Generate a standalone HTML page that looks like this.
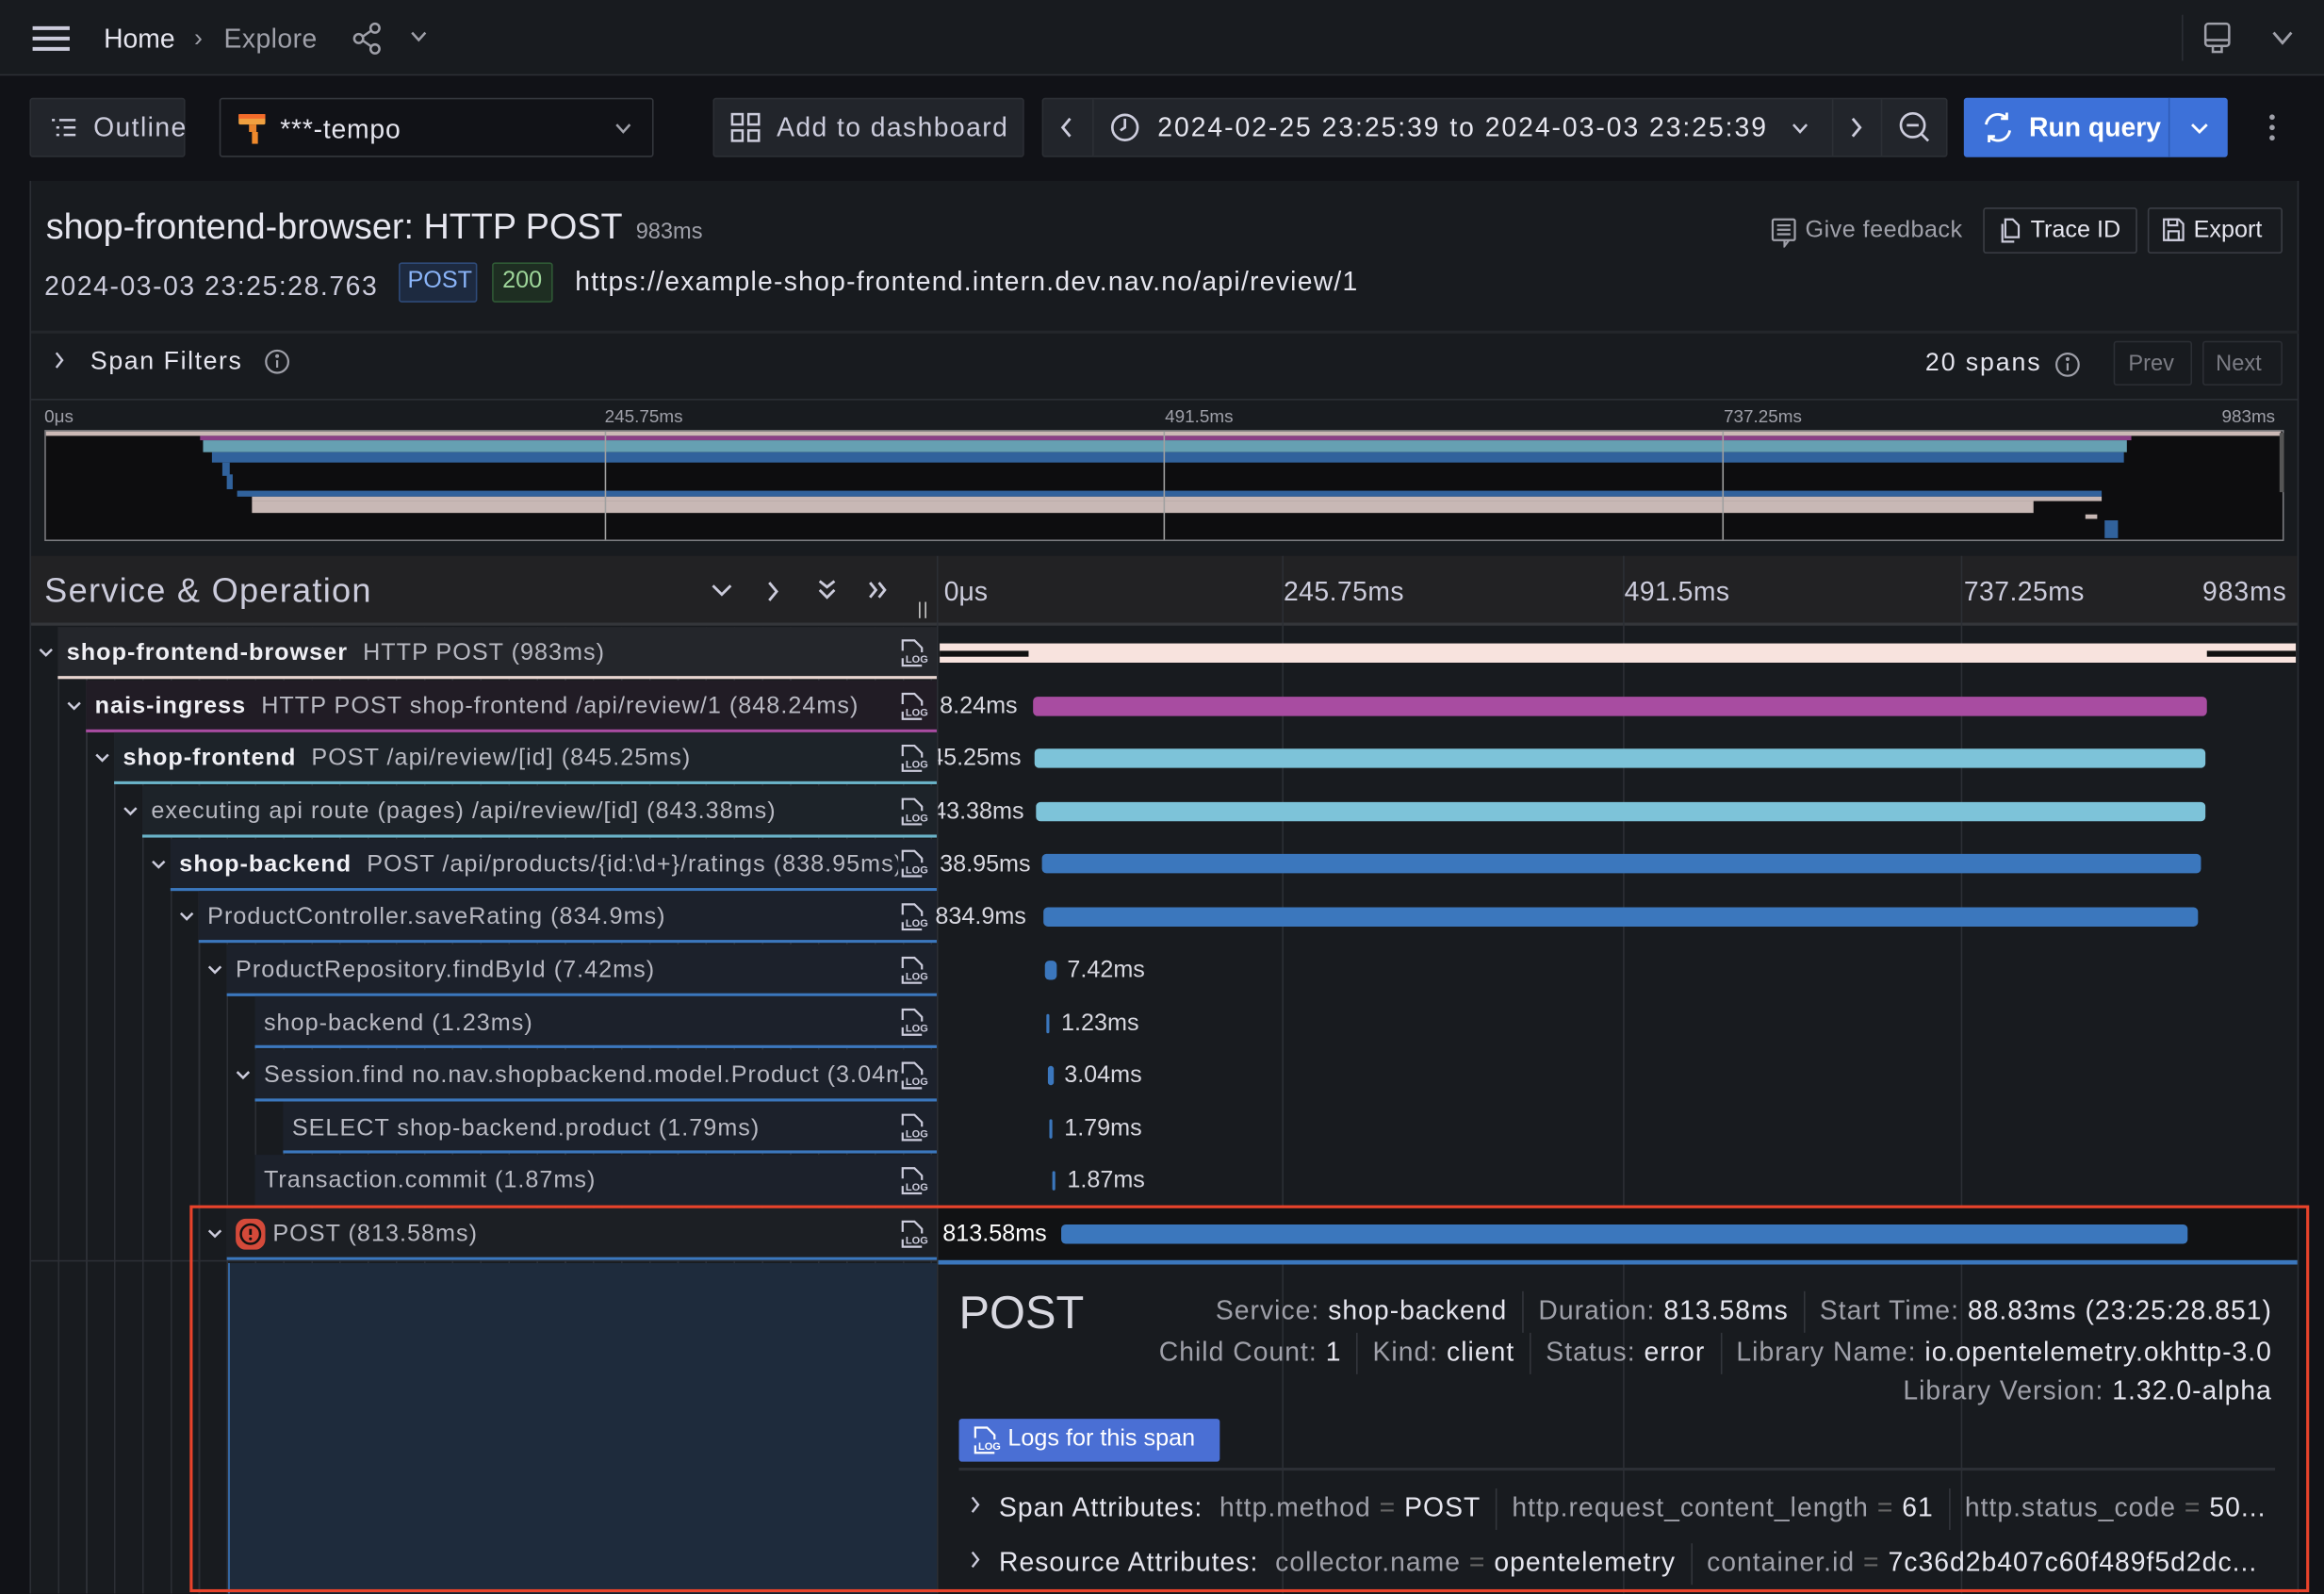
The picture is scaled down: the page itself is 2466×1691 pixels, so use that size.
<!DOCTYPE html>
<html><head><meta charset="utf-8">
<style>
*{box-sizing:border-box;margin:0;padding:0}
html,body{width:2466px;height:1690px;overflow:hidden;background:#111217}
#w{position:absolute;left:0;top:0;width:1568px;height:1075px;transform:scale(1.57270);transform-origin:0 0;font-family:"Liberation Sans",sans-serif;color:#ccccdc;background:#111217;overflow:hidden}
.a{position:absolute}
.t{position:absolute;white-space:nowrap;line-height:1}
.btn{position:absolute;border:1px solid #2c2f35;background:#22252b;border-radius:2px}
.g{color:#9fa0a9}
.bar{position:absolute;height:13px;border-radius:3px}
.tk{position:absolute;top:375px;width:1px;background:#2c2f35}
.lbl{position:absolute;font-size:16px;white-space:nowrap;line-height:1}
.rl{letter-spacing:0.65px}
.md{font-size:18px;white-space:nowrap;letter-spacing:0.65px}
.md b{color:#e6e6ef;font-weight:normal}
.md .s{display:inline-block;width:1px;height:28px;background:#33363c;vertical-align:middle;margin:0 10px}
</style></head><body><div id="w">

<!-- top bar -->
<div class="a" style="left:0;top:0;width:1568px;height:51px;background:#181b1f;border-bottom:1px solid #2c2f35"></div>
<svg class="a" style="left:21px;top:16px" width="27" height="20"><g stroke="#ccccdc" stroke-width="2.5"><line x1="1" y1="3" x2="26" y2="3"/><line x1="1" y1="10" x2="26" y2="10"/><line x1="1" y1="17" x2="26" y2="17"/></g></svg>
<div class="t" style="left:70px;top:17px;font-size:18px;color:#e6e6ef">Home</div>
<div class="t g" style="left:131px;top:17px;font-size:17px">›</div>
<div class="t g" style="left:151px;top:17px;font-size:18px;letter-spacing:0.3px">Explore</div>
<svg class="a" style="left:237px;top:15px" width="22" height="22" fill="none" stroke="#9fa0a9" stroke-width="1.6"><circle cx="16" cy="4" r="3"/><circle cx="5" cy="11" r="3"/><circle cx="16" cy="18" r="3"/><line x1="8" y1="9.5" x2="13" y2="6"/><line x1="8" y1="12.5" x2="13" y2="16"/></svg>
<svg class="a" style="left:277px;top:21px" width="11" height="8" fill="none" stroke="#9fa0a9" stroke-width="1.6"><polyline points="1,1 5.5,6 10,1"/></svg>
<div class="a" style="left:1472px;top:10px;width:1px;height:31px;background:#2c2f35"></div>
<svg class="a" style="left:1486px;top:15px" width="20" height="22" fill="none" stroke="#9fa0a9" stroke-width="1.6"><rect x="2" y="1" width="16" height="15" rx="2"/><line x1="2" y1="12" x2="18" y2="12"/><rect x="7" y="16" width="6" height="4"/></svg>
<svg class="a" style="left:1533px;top:21px" width="14" height="10" fill="none" stroke="#9fa0a9" stroke-width="1.8"><polyline points="1,1 7,8 13,1"/></svg>

<!-- toolbar -->
<div class="btn" style="left:20px;top:66px;width:105px;height:40px"></div>
<svg class="a" style="left:34px;top:79px" width="18" height="14" stroke="#ccccdc" stroke-width="1.6"><line x1="1" y1="2" x2="3" y2="2"/><line x1="6" y1="2" x2="17" y2="2"/><line x1="4" y1="7" x2="6" y2="7"/><line x1="9" y1="7" x2="17" y2="7"/><line x1="4" y1="12" x2="6" y2="12"/><line x1="9" y1="12" x2="17" y2="12"/></svg>
<div class="t" style="left:63px;top:77px;font-size:18px;letter-spacing:0.9px">Outline</div>
<div class="a" style="left:148px;top:66px;width:293px;height:40px;background:#111217;border:1px solid #34373d;border-radius:2px"></div>
<svg class="a" style="left:160px;top:76px" width="22" height="22"><rect x="1" y="1" width="18" height="7" rx="1" fill="#f0a040"/><rect x="1" y="1" width="18" height="3" fill="#f46a2a"/><rect x="8" y="8" width="5" height="5" fill="#e8832c"/><rect x="10" y="13" width="4" height="8" fill="#f08a2c"/></svg>
<div class="t" style="left:189px;top:78px;font-size:18px;color:#e6e6ef;letter-spacing:0.5px">***-tempo</div>
<svg class="a" style="left:415px;top:83px" width="11" height="8" fill="none" stroke="#9fa0a9" stroke-width="1.6"><polyline points="1,1 5.5,6 10,1"/></svg>

<div class="btn" style="left:481px;top:66px;width:210px;height:40px"></div>
<svg class="a" style="left:493px;top:76px" width="20" height="20" fill="none" stroke="#ccccdc" stroke-width="1.6"><rect x="1" y="1" width="7" height="7"/><rect x="12" y="1" width="7" height="7"/><rect x="1" y="12" width="7" height="7"/><rect x="12" y="12" width="7" height="7"/></svg>
<div class="t" style="left:524px;top:77px;font-size:18px;letter-spacing:0.9px">Add to dashboard</div>

<div class="btn" style="left:703px;top:66px;width:611px;height:40px"></div>
<div class="a" style="left:737px;top:67px;width:1px;height:38px;background:#2c2f35"></div>
<div class="a" style="left:1236px;top:67px;width:1px;height:38px;background:#2c2f35"></div>
<div class="a" style="left:1269px;top:67px;width:1px;height:38px;background:#2c2f35"></div>
<svg class="a" style="left:715px;top:79px" width="10" height="14" fill="none" stroke="#ccccdc" stroke-width="1.8"><polyline points="7,1 2,7 7,13"/></svg>
<svg class="a" style="left:749px;top:76px" width="20" height="20" fill="none" stroke="#ccccdc" stroke-width="1.7"><circle cx="10" cy="10" r="8.5"/><polyline points="10,4 10,10 7,12"/></svg>
<div class="t" style="left:781px;top:77px;font-size:18px;color:#e6e6ef;letter-spacing:1.25px">2024-02-25 23:25:39 to 2024-03-03 23:25:39</div>
<svg class="a" style="left:1209px;top:83px" width="11" height="8" fill="none" stroke="#ccccdc" stroke-width="1.6"><polyline points="1,1 5.5,6 10,1"/></svg>
<svg class="a" style="left:1247px;top:79px" width="10" height="14" fill="none" stroke="#ccccdc" stroke-width="1.8"><polyline points="3,1 8,7 3,13"/></svg>
<svg class="a" style="left:1281px;top:75px" width="22" height="22" fill="none" stroke="#ccccdc" stroke-width="1.7"><circle cx="9.5" cy="9.5" r="8"/><line x1="5.5" y1="9.5" x2="13.5" y2="9.5"/><line x1="15" y1="15" x2="20" y2="20"/></svg>

<div class="a" style="left:1325px;top:66px;width:178px;height:40px;background:#3d71d9;border-radius:2px"></div>
<div class="a" style="left:1463px;top:66px;width:1px;height:40px;background:#2f5bb5"></div>
<svg class="a" style="left:1337px;top:75px" width="22" height="22" fill="none" stroke="#fff" stroke-width="1.8"><path d="M17 5 A8 8 0 0 0 3 9"/><polyline points="17,1 17,5 13,5"/><path d="M5 17 A8 8 0 0 0 19 13"/><polyline points="5,21 5,17 9,17"/></svg>
<div class="t" style="left:1369px;top:77px;font-size:18px;color:#fff;font-weight:bold">Run query</div>
<svg class="a" style="left:1478px;top:83px" width="12" height="8" fill="none" stroke="#fff" stroke-width="1.8"><polyline points="1,1 6,6 11,1"/></svg>
<svg class="a" style="left:1530px;top:76px" width="6" height="20" fill="#9fa0a9"><circle cx="3" cy="3" r="1.8"/><circle cx="3" cy="10" r="1.8"/><circle cx="3" cy="17" r="1.8"/></svg>

<!-- main panel -->
<div class="a" style="left:20px;top:122px;width:1531px;height:953px;background:#181b1f;border-left:1px solid #2c2f35;border-right:1px solid #2c2f35"></div>
<div class="t" style="left:31px;top:142px;font-size:24px;color:#e6e6ef">shop-frontend-browser: HTTP POST</div>
<div class="t g" style="left:429px;top:149px;font-size:15px">983ms</div>
<div class="t" style="left:30px;top:184px;font-size:18px;letter-spacing:1px">2024-03-03 23:25:28.763</div>
<div class="a" style="left:269px;top:177px;width:53px;height:27px;background:#1d2a40;border:1px solid #2e4a78;border-radius:2px"></div>
<div class="t" style="left:275px;top:182px;font-size:16px;color:#8ab4f8">POST</div>
<div class="a" style="left:332px;top:177px;width:41px;height:27px;background:#1e2e22;border:1px solid #2f5a35;border-radius:2px"></div>
<div class="t" style="left:339px;top:182px;font-size:16px;color:#9ed69a">200</div>
<div class="t" style="left:388px;top:181px;font-size:18px;color:#e6e6ef;letter-spacing:0.8px">https://example-shop-frontend.intern.dev.nav.no/api/review/1</div>

<svg class="a" style="left:1195px;top:147px" width="18" height="20" fill="none" stroke="#9fa0a9" stroke-width="1.4"><rect x="1" y="1" width="15" height="14" rx="1"/><line x1="4" y1="5" x2="13" y2="5"/><line x1="4" y1="8" x2="13" y2="8"/><line x1="4" y1="11" x2="13" y2="11"/><polyline points="9,15 9,19 12,15"/></svg>
<div class="t g" style="left:1218px;top:148px;font-size:16px;letter-spacing:0.3px">Give feedback</div>
<div class="a" style="left:1338px;top:140px;width:104px;height:31px;border:1px solid #3b3e45;border-radius:2px"></div>
<svg class="a" style="left:1349px;top:147px" width="14" height="17" fill="none" stroke="#ccccdc" stroke-width="1.4"><path d="M4 1h5l4 4v8H4z"/><path d="M2 4v12h8"/></svg>
<div class="t" style="left:1370px;top:148px;font-size:16px;color:#e6e6ef">Trace ID</div>
<div class="a" style="left:1449px;top:140px;width:91px;height:31px;border:1px solid #3b3e45;border-radius:2px"></div>
<svg class="a" style="left:1459px;top:147px" width="15" height="16" fill="none" stroke="#ccccdc" stroke-width="1.4"><path d="M1 1h10l3 3v11H1z"/><rect x="4" y="1" width="6" height="4"/><rect x="4" y="9" width="7" height="6"/></svg>
<div class="t" style="left:1480px;top:148px;font-size:16px;color:#e6e6ef">Export</div>

<div class="a" style="left:21px;top:223px;width:1530px;height:2px;background:#23262b"></div>
<svg class="a" style="left:36px;top:237px" width="8" height="12" fill="none" stroke="#ccccdc" stroke-width="1.5"><polyline points="2,1 6,6 2,11"/></svg>
<div class="t" style="left:61px;top:235px;font-size:17px;color:#e6e6ef;letter-spacing:1px">Span Filters</div>
<svg class="a" style="left:178px;top:235px" width="18" height="18" fill="none" stroke="#9fa0a9" stroke-width="1.4"><circle cx="9" cy="9" r="7.5"/><line x1="9" y1="8" x2="9" y2="13"/><circle cx="9" cy="5.2" r="0.6" fill="#9fa0a9"/></svg>
<div class="t" style="left:1299px;top:236px;font-size:17px;color:#e6e6ef;letter-spacing:1.2px">20 spans</div>
<svg class="a" style="left:1386px;top:237px" width="18" height="18" fill="none" stroke="#9fa0a9" stroke-width="1.4"><circle cx="9" cy="9" r="7.5"/><line x1="9" y1="8" x2="9" y2="13"/><circle cx="9" cy="5.2" r="0.6" fill="#9fa0a9"/></svg>
<div class="a" style="left:1426px;top:230px;width:53px;height:30px;border:1px solid #2c2f35;border-radius:2px"></div>
<div class="t" style="left:1436px;top:238px;font-size:15px;color:#7b7c84">Prev</div>
<div class="a" style="left:1486px;top:230px;width:54px;height:30px;border:1px solid #2c2f35;border-radius:2px"></div>
<div class="t" style="left:1495px;top:238px;font-size:15px;color:#7b7c84">Next</div>

<!-- minimap -->
<div class="a" style="left:21px;top:269px;width:1530px;height:1px;background:#2c2f35"></div>
<div class="t g" style="left:30px;top:275px;font-size:12px">0μs</div>
<div class="t g" style="left:408px;top:275px;font-size:12px">245.75ms</div>
<div class="t g" style="left:786px;top:275px;font-size:12px">491.5ms</div>
<div class="t g" style="left:1163px;top:275px;font-size:12px">737.25ms</div>
<div class="t g" style="left:1499px;top:275px;font-size:12px">983ms</div>
<div class="a" style="left:30px;top:290px;width:1511px;height:75px;background:#0d0d0f;border:1.5px solid #7b7c80"></div>
<div class="a" style="left:31px;top:291px;width:1508px;height:3px;background:#cbb9b6"></div>
<div class="a" style="left:135px;top:294px;width:1303px;height:3px;background:#8b3f87"></div>
<div class="a" style="left:137px;top:297px;width:1298px;height:8px;background:#66a0b2"></div>
<div class="a" style="left:143px;top:305px;width:1290px;height:7px;background:#31629c"></div>
<div class="a" style="left:150px;top:312px;width:5px;height:9px;background:#31629c"></div>
<div class="a" style="left:153px;top:320px;width:4px;height:10px;background:#31629c"></div>
<div class="a" style="left:160px;top:331px;width:1258px;height:4px;background:#31629c"></div>
<div class="a" style="left:170px;top:335px;width:1248px;height:3px;background:#c8b8b5"></div>
<div class="a" style="left:170px;top:338px;width:1202px;height:8px;background:#c8b8b5"></div>
<div class="a" style="left:1407px;top:347px;width:8px;height:3px;background:#c8b8b5"></div>
<div class="a" style="left:1420px;top:351px;width:9px;height:12px;background:#31629c"></div>
<div class="a" style="left:1538px;top:292px;width:3px;height:40px;background:#555"></div>
<div class="a" style="left:408px;top:291px;width:1px;height:73px;background:#a0a0a0"></div>
<div class="a" style="left:785px;top:291px;width:1px;height:73px;background:#a0a0a0"></div>
<div class="a" style="left:1162px;top:291px;width:1px;height:73px;background:#a0a0a0"></div>

<!-- trace header -->
<div class="a" style="left:21px;top:375px;width:1529px;height:47px;background:#222224;border-bottom:2px solid #34363a"></div>
<div class="t" style="left:30px;top:387px;font-size:23px;letter-spacing:0.8px">Service &amp; Operation</div>
<svg class="a" style="left:479px;top:391px" width="120" height="16" fill="none" stroke="#ccccdc" stroke-width="1.8"><polyline points="2,4 8,10 14,4"/><polyline points="40,2 45,8 40,14"/><polyline points="74,1 79,5 84,1"/><polyline points="74,7 79,12 84,7"/><polyline points="108,2 112,7 108,12"/><polyline points="114,2 118,7 114,12"/></svg>
<div class="a" style="left:620px;top:406px;width:1px;height:11px;background:#ccc"></div>
<div class="a" style="left:624px;top:406px;width:1px;height:11px;background:#ccc"></div>
<div class="a" style="left:632px;top:375px;width:1px;height:700px;background:#2c2f35"></div>
<div class="tk" style="left:865px;height:700px"></div>
<div class="tk" style="left:1095px;height:700px"></div>
<div class="tk" style="left:1323px;height:700px"></div>
<div class="t" style="left:637px;top:390px;font-size:18px">0μs</div>
<div class="t" style="left:866px;top:390px;font-size:18px;letter-spacing:0.3px">245.75ms</div>
<div class="t" style="left:1096px;top:390px;font-size:18px;letter-spacing:0.3px">491.5ms</div>
<div class="t" style="left:1325px;top:390px;font-size:18px;letter-spacing:0.3px">737.25ms</div>
<div class="t" style="left:1486px;top:390px;font-size:18px;letter-spacing:0.6px">983ms</div>

<!-- left guides -->
<div class="a" style="left:20px;top:423px;width:612px;height:652px;background:
repeating-linear-gradient(90deg,#2c2f35 0 1px,#181b1f 1px 19px);"></div>

<!-- rows -->
<div class="a" style="left:39px;top:423px;width:593px;height:35px;background:#24262b;border-bottom:2px solid #e9d6d1"></div>
<div class="a" style="left:58px;top:459px;width:574px;height:35px;background:#211c25;border-bottom:2px solid #a84ca1"></div>
<div class="a" style="left:77px;top:494px;width:555px;height:35px;background:#1d2329;border-bottom:2px solid #6ab3c8"></div>
<div class="a" style="left:96px;top:530px;width:536px;height:35px;background:#1d2329;border-bottom:2px solid #6ab3c8"></div>
<div class="a" style="left:115px;top:566px;width:517px;height:35px;background:#1c212b;border-bottom:2px solid #3b77bd"></div>
<div class="a" style="left:134px;top:601px;width:498px;height:35px;background:#1c212b;border-bottom:2px solid #3b77bd"></div>
<div class="a" style="left:153px;top:637px;width:479px;height:35px;background:#1c212b;border-bottom:2px solid #3b77bd"></div>
<div class="a" style="left:172px;top:672px;width:460px;height:35px;background:#1c212b;border-bottom:2px solid #3b77bd"></div>
<div class="a" style="left:172px;top:708px;width:460px;height:35px;background:#1c212b;border-bottom:2px solid #3b77bd"></div>
<div class="a" style="left:191px;top:743px;width:441px;height:35px;background:#1c212b;border-bottom:2px solid #3b77bd"></div>
<div class="a" style="left:172px;top:779px;width:460px;height:35px;background:#1c212b"></div>
<div class="a" style="left:153px;top:815px;width:479px;height:35px;background:#1c1f24;border-bottom:2px solid #3b77bd"></div>
<div class="a" style="left:20px;top:850px;width:612px;height:1px;background:#2c2f35"></div>
<div class="a" style="left:154px;top:852px;width:478px;height:223px;background:#1e2b3c;border-left:1px solid #3b77bd"></div>

<!-- chevrons -->
<svg class="a" style="left:0;top:423px" width="632" height="420" fill="none" stroke="#ccccdc" stroke-width="1.6">
<polyline points="27,15 31,19 35,15"/>
<polyline points="46,51 50,55 54,51"/>
<polyline points="65,86 69,90 73,86"/>
<polyline points="84,122 88,126 92,122"/>
<polyline points="103,158 107,162 111,158"/>
<polyline points="122,193 126,197 130,193"/>
<polyline points="141,229 145,233 149,229"/>
<polyline points="160,300 164,304 168,300"/>
<polyline points="141,407 145,411 149,407"/>
</svg>

<div class="lbl rl" style="left:45px;top:433px;color:#f0f0f5"><b>shop-frontend-browser</b>&nbsp; <span style="color:#b8b9c2">HTTP POST (983ms)</span></div>
<div class="lbl rl" style="left:64px;top:469px;color:#f0f0f5"><b>nais-ingress</b>&nbsp; <span style="color:#b8b9c2">HTTP POST shop-frontend /api/review/1 (848.24ms)</span></div>
<div class="lbl rl" style="left:83px;top:504px;color:#f0f0f5"><b>shop-frontend</b>&nbsp; <span style="color:#b8b9c2">POST /api/review/[id] (845.25ms)</span></div>
<div class="lbl rl" style="left:102px;top:540px;color:#b8b9c2">executing api route (pages) /api/review/[id] (843.38ms)</div>
<div class="lbl rl" style="left:121px;top:576px;color:#f0f0f5;width:485px;overflow:hidden"><b>shop-backend</b>&nbsp; <span style="color:#b8b9c2">POST /api/products/{id:\d+}/ratings (838.95ms)</span></div>
<div class="lbl rl" style="left:140px;top:611px;color:#b8b9c2">ProductController.saveRating (834.9ms)</div>
<div class="lbl rl" style="left:159px;top:647px;color:#b8b9c2">ProductRepository.findById (7.42ms)</div>
<div class="lbl rl" style="left:178px;top:683px;color:#b8b9c2">shop-backend (1.23ms)</div>
<div class="lbl rl" style="left:178px;top:718px;color:#b8b9c2;width:428px;overflow:hidden">Session.find no.nav.shopbackend.model.Product (3.04ms)</div>
<div class="lbl rl" style="left:197px;top:754px;color:#b8b9c2">SELECT shop-backend.product (1.79ms)</div>
<div class="lbl rl" style="left:178px;top:789px;color:#b8b9c2">Transaction.commit (1.87ms)</div>
<svg class="a" style="left:159px;top:822px" width="20" height="21"><rect x="0" y="0" width="20" height="21" rx="7" fill="#d44a3a"/><circle cx="10" cy="10.5" r="6.5" fill="none" stroke="#111" stroke-width="1.6"/><line x1="10" y1="7" x2="10" y2="11" stroke="#111" stroke-width="1.8"/><circle cx="10" cy="13.6" r="1" fill="#111"/></svg>
<div class="lbl rl" style="left:184px;top:825px;color:#b8b9c2">POST (813.58ms)</div>

<!-- log icons -->
<svg class="a" style="left:606px;top:430px" width="22" height="420" fill="none" stroke="#ccccdc" stroke-width="1.4">
<defs><g id="lg"><path d="M3 9V2h8l5 5v3M3 14v5h13"/><text x="5" y="17" font-size="7" fill="#ccccdc" stroke="none" font-family="Liberation Sans" font-weight="bold">LOG</text></g></defs>
<use href="#lg" y="0"/><use href="#lg" y="36"/><use href="#lg" y="71"/><use href="#lg" y="107"/><use href="#lg" y="142"/><use href="#lg" y="178"/><use href="#lg" y="214"/><use href="#lg" y="249"/><use href="#lg" y="285"/><use href="#lg" y="320"/><use href="#lg" y="356"/><use href="#lg" y="392"/>
</svg>

<!-- timeline bars -->
<div class="a" style="left:633px;top:815px;width:917px;height:35px;background:#111214"></div>
<div class="a" style="left:633px;top:850px;width:917px;height:3px;background:#3b77bd"></div>
<div class="bar" style="left:634px;top:434px;width:915px;background:#f8e3de;border-radius:0"></div>
<div class="a" style="left:634px;top:439px;width:60px;height:4px;background:#111"></div>
<div class="a" style="left:1489px;top:439px;width:60px;height:4px;background:#111"></div>
<div class="bar" style="left:697px;top:470px;width:792px;background:#a84ca1"></div>
<div class="bar" style="left:698px;top:505px;width:790px;background:#7dc3d9"></div>
<div class="bar" style="left:699px;top:541px;width:789px;background:#7dc3d9"></div>
<div class="bar" style="left:703px;top:576px;width:782px;background:#3b77bd"></div>
<div class="bar" style="left:704px;top:612px;width:779px;background:#3b77bd"></div>
<div class="bar" style="left:705px;top:648px;width:8px;background:#3b77bd"></div>
<div class="bar" style="left:706px;top:684px;width:2px;background:#3b77bd"></div>
<div class="bar" style="left:707px;top:719px;width:4px;background:#3b77bd"></div>
<div class="bar" style="left:708px;top:755px;width:2px;background:#3b77bd"></div>
<div class="bar" style="left:710px;top:790px;width:2px;background:#3b77bd"></div>
<div class="bar" style="left:716px;top:826px;width:760px;background:#3b77bd"></div>
<div class="lbl" style="left:634px;top:469px;color:#d8d8e0">8.24ms</div>
<div class="lbl" style="left:633px;top:504px;color:#d8d8e0;width:56px;overflow:hidden;direction:rtl">845.25ms</div>
<div class="lbl" style="left:633px;top:540px;color:#d8d8e0;width:58px;overflow:hidden;direction:rtl">843.38ms</div>
<div class="lbl" style="left:634px;top:576px;color:#d8d8e0">38.95ms</div>
<div class="lbl" style="left:631px;top:611px;color:#d8d8e0">834.9ms</div>
<div class="lbl" style="left:720px;top:647px;color:#d8d8e0">7.42ms</div>
<div class="lbl" style="left:716px;top:683px;color:#d8d8e0">1.23ms</div>
<div class="lbl" style="left:718px;top:718px;color:#d8d8e0">3.04ms</div>
<div class="lbl" style="left:718px;top:754px;color:#d8d8e0">1.79ms</div>
<div class="lbl" style="left:720px;top:789px;color:#d8d8e0">1.87ms</div>
<div class="lbl" style="left:636px;top:825px;color:#fff">813.58ms</div>

<!-- detail -->
<div class="t" style="left:647px;top:870px;font-size:31px;color:#d8d8e0">POST</div>
<div class="a md" style="right:35px;top:871px;text-align:right"><span class="g">Service:</span> <b>shop-backend</b><span class="s"></span><span class="g">Duration:</span> <b>813.58ms</b><span class="s"></span><span class="g">Start Time:</span> <b>88.83ms (23:25:28.851)</b></div>
<div class="a md" style="right:35px;top:899px;text-align:right"><span class="g">Child Count:</span> <b>1</b><span class="s"></span><span class="g">Kind:</span> <b>client</b><span class="s"></span><span class="g">Status:</span> <b>error</b><span class="s"></span><span class="g">Library Name:</span> <b>io.opentelemetry.okhttp-3.0</b></div>
<div class="a md" style="right:35px;top:928px;text-align:right"><span class="g">Library Version:</span> <b>1.32.0-alpha</b></div>
<div class="a" style="left:647px;top:957px;width:176px;height:29px;background:#4a6fd4;border-radius:2px"></div>
<svg class="a" style="left:655px;top:961px" width="20" height="22" fill="none" stroke="#fff" stroke-width="1.4"><path d="M3 9V2h8l5 5v3M3 14v5h13"/><text x="5" y="17" font-size="7" fill="#fff" stroke="none" font-family="Liberation Sans" font-weight="bold">LOG</text></svg>
<div class="t" style="left:680px;top:963px;font-size:16px;color:#fff">Logs for this span</div>
<div class="a" style="left:647px;top:990px;width:888px;height:2px;background:#2c2f35"></div>
<svg class="a" style="left:654px;top:1009px" width="8" height="12" fill="none" stroke="#ccccdc" stroke-width="1.5"><polyline points="2,1 6,6 2,11"/></svg>
<div class="a md" style="left:674px;top:1004px"><span style="color:#e6e6ef">Span Attributes:</span>&nbsp; <span class="g">http.method</span> <span style="color:#666">=</span> <b>POST</b><span class="s"></span><span class="g">http.request_content_length</span> <span style="color:#666">=</span> <b>61</b><span class="s"></span><span class="g">http.status_code</span> <span style="color:#666">=</span> <b>50...</b></div>
<svg class="a" style="left:654px;top:1046px" width="8" height="12" fill="none" stroke="#ccccdc" stroke-width="1.5"><polyline points="2,1 6,6 2,11"/></svg>
<div class="a md" style="left:674px;top:1041px"><span style="color:#e6e6ef">Resource Attributes:</span>&nbsp; <span class="g">collector.name</span> <span style="color:#666">=</span> <b>opentelemetry</b><span class="s"></span><span class="g">container.id</span> <span style="color:#666">=</span> <b>7c36d2b407c60f489f5d2dc...</b></div>

<!-- red highlight -->
<div class="a" style="left:128px;top:813px;width:1430px;height:261px;border:2px solid #e8432b"></div>

</div></body></html>
